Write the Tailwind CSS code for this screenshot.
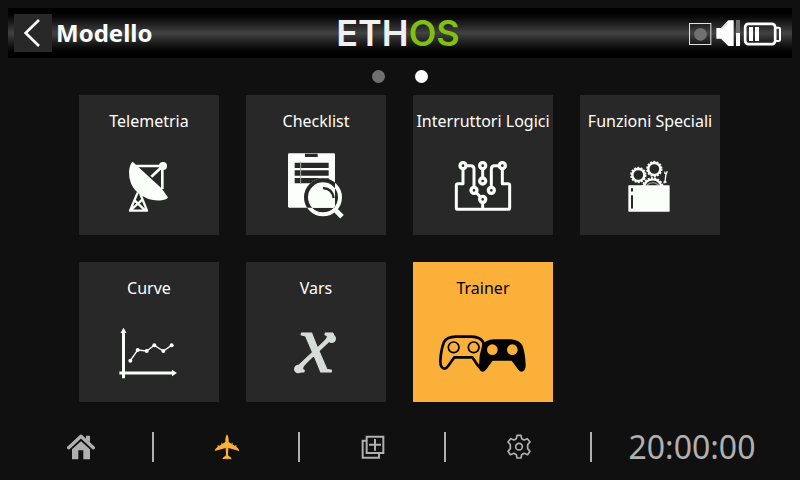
<!DOCTYPE html>
<html lang="it">
<head>
<meta charset="utf-8">
<meta name="viewport" content="width=device-width, initial-scale=1">
<title>Modello</title>
<script src="https://cdn.jsdelivr.net/npm/@tailwindcss/browser@4"></script>
</head>
<body class="flex min-h-screen flex-col bg-[#101010] p-2 font-['Noto_Sans',sans-serif] text-white">

<header class="flex h-[50px] items-center bg-linear-to-b from-black via-[#424342] to-black">
  <div class="flex flex-1 items-center gap-1 pl-1.5">
    <button type="button" aria-label="Indietro" class="size-[38px] bg-[#282828]">
      <svg class="size-full" viewBox="0 0 114 114" fill="none" stroke="#fff" stroke-width="8"><path d="M75 18 35 57l40 39"/></svg>
    </button>
    <h1 class="text-2xl font-bold">Modello</h1>
  </div>
  <div class="font-['Inter',sans-serif] text-4xl font-semibold text-[#f0f0f0]">ETH<span class="text-[#80c010]">OS</span></div>
  <div class="flex flex-1 justify-end pr-[10px]">
    <svg class="h-[26px] w-[93px]" viewBox="57 60 279 78" role="img" aria-label="Registrazione, volume, batteria">
      <rect x="58.500" y="70.500" width="64" height="63" fill="none" stroke="#dfe3df" stroke-width="3"/>
      <circle cx="91.500" cy="103" r="19" fill="#707070"/>
      <path fill="#fff" d="M139 84h14l22-23h16v77h-16l-22-22h-14z"/>
      <path fill="none" stroke="#aaa" stroke-width="2" d="M155 87l17-18"/>
      <path fill="#707070" d="M198 60h12v39h-12z"/>
      <path fill="#fff" d="M198 99h12v39h-12zM237 81h12v42h-12zM255 81h12v42h-12z"/>
      <rect x="225.500" y="71.500" width="90" height="61" rx="10" fill="none" stroke="#fff" stroke-width="8"/>
      <path fill="none" stroke="#fff" stroke-width="6" d="M316 83h10q4 0 4 4v32q0 4-4 4h-10"/>
    </svg>
  </div>
</header>

<nav aria-label="Pagine" class="flex justify-center gap-[30px] pt-3">
  <button type="button" aria-label="Pagina 1" class="size-[13px] rounded-full bg-[#707070]"></button>
  <button type="button" aria-label="Pagina 2" aria-current="page" class="size-[13px] rounded-full bg-white"></button>
</nav>

<main class="grid grid-cols-4 gap-[27px] pt-3 pr-[72px] pl-[71px]">
  <button type="button" class="flex flex-col bg-[#282828] pt-3.5">
    <span class="mb-3 w-full text-center text-base whitespace-nowrap">Telemetria</span>
    <svg class="w-full" viewBox="0 150 420 270" aria-hidden="true" fill="none" stroke="#fafffa">
      <path fill="#fafffa" stroke="none" d="M161 200q-9 6-11 30-1 39 27 64 32 26 71 22 16-2 19-9-9-12-18-26z"/>
      <path stroke-width="8" d="M166 213h80M250 216v66M246 218l-29 27"/>
      <circle cx="252" cy="213" r="12" fill="#fafffa" stroke="none"/>
      <path stroke-width="7" stroke-linejoin="round" d="M176 293l-23 54h51l-20-50M167 316l31 30M190 314l-34 31"/>
    </svg>
  </button>

  <button type="button" class="flex flex-col bg-[#282828] pt-3.5">
    <span class="mb-3 w-full text-center text-base whitespace-nowrap">Checklist</span>
    <svg class="w-full" viewBox="0 150 420 270" aria-hidden="true">
      <clipPath id="sheet"><rect x="126" y="175" width="141" height="163" rx="4"/></clipPath>
      <rect x="126" y="175" width="141" height="163" rx="4" fill="#fafffa"/>
      <path fill="#282828" d="M177 176h38v10h-38zM146 203h102v16h-102zM146 226h102v16h-102zM146 249h102v16h-102z"/>
      <path stroke="#aaa" stroke-width="3" d="M164 202v64"/>
      <circle cx="231" cy="307" r="46" fill="#fafffa" clip-path="url(#sheet)"/>
      <circle cx="231" cy="307" r="51" fill="none" stroke="#fafffa" stroke-width="12"/>
      <circle cx="231" cy="307" r="51" fill="none" stroke="#282828" stroke-width="12" clip-path="url(#sheet)"/>
      <path stroke="#fafffa" stroke-width="15" d="M266 343l22 22"/>
      <path fill="none" stroke="#282828" stroke-width="7" d="M231 279q28 2 32 30"/>
    </svg>
  </button>

  <button type="button" class="flex flex-col bg-[#282828] pt-3.5">
    <span class="mb-3 w-full text-center text-base whitespace-nowrap">Interruttori Logici</span>
    <svg class="w-full" viewBox="9 150 420 270" aria-hidden="true" fill="none" stroke="#fafffa" stroke-width="9" stroke-linejoin="round">
      <path d="M159 220v46h-15q-5 0-5 5v67q0 5 5 5h150q5 0 5-5v-67q0-5-5-5h-17v-46M168 212h14q10 0 10 10v55M268 212h-14q-10 0-10 10v55M218 220v30M198 292l13 14M218 320v22"/>
      <g stroke-width="10"><circle cx="159" cy="212" r="9"/><circle cx="218" cy="212" r="9"/><circle cx="277" cy="212" r="9"/><circle cx="218" cy="258" r="9"/><circle cx="192" cy="286" r="9"/><circle cx="244" cy="286" r="9"/><circle cx="218" cy="313" r="9"/></g>
    </svg>
  </button>

  <button type="button" class="flex flex-col bg-[#282828] pt-3.5">
    <span class="mb-3 w-full text-center text-base whitespace-nowrap">Funzioni Speciali</span>
    <svg class="w-full" viewBox="9 150 420 270" aria-hidden="true" fill="none" stroke="#fafffa">
      <g stroke-width="7"><circle cx="184" cy="240" r="18"/><circle cx="232" cy="222" r="18"/><circle cx="227" cy="280" r="27"/></g>
      <g stroke-width="5" stroke-dasharray="6 4"><circle cx="184" cy="240" r="22"/><circle cx="232" cy="222" r="22"/><circle cx="227" cy="280" r="31"/></g>
      <path stroke="#999" stroke-width="4" d="M209 271q18-16 36 0"/>
      <path stroke-width="4" d="M267 236l-3 24M263 230l1 5 4 1 3-7M261 265l1-5h4l1 4"/>
      <rect x="154" y="271" width="124" height="79" rx="2" fill="#fafffa" stroke="none"/>
      <path stroke="#282828" stroke-width="6" stroke-linecap="round" d="M165 282v5M165 303v35"/>
    </svg>
  </button>

  <button type="button" class="flex flex-col bg-[#282828] pt-3.5">
    <span class="mb-3 w-full text-center text-base whitespace-nowrap">Curve</span>
    <svg class="w-full" viewBox="0 150 420 270" aria-hidden="true" fill="none" stroke="#fafffa">
      <path stroke-width="9" d="M133.500 208v141M121 333h160"/>
      <path fill="#fafffa" stroke="none" d="M133.500 197l9 16h-18zM294 333l-15-10v20z"/>
      <path stroke-width="4" d="M154 296l22-32 27 3 23-17 27 17 25-17"/>
      <g fill="#fafffa" stroke="none"><circle cx="154" cy="296" r="6"/><circle cx="176" cy="264" r="6"/><circle cx="203" cy="267" r="6"/><circle cx="226" cy="250" r="6"/><circle cx="253" cy="267" r="6"/><circle cx="278" cy="250" r="6"/></g>
    </svg>
  </button>

  <button type="button" class="flex flex-col bg-[#282828] pt-3.5">
    <span class="mb-3 w-full text-center text-base whitespace-nowrap">Vars</span>
    <svg class="w-full overflow-visible" viewBox="0 150 420 270" aria-hidden="true" fill="#d8dcd8">
      <text x="208" y="331" text-anchor="middle" font-size="252" stroke="#d8dcd8" stroke-width="3" stroke-linejoin="round" class="font-['Liberation_Serif',serif] italic">x</text>
      <circle cx="157" cy="321" r="13"/>
      <circle cx="257" cy="230" r="13"/>
    </svg>
  </button>

  <button type="button" class="flex flex-col bg-[#fab039] pt-3.5 text-black">
    <span class="mb-3 w-full text-center text-base whitespace-nowrap">Trainer</span>
    <svg class="w-full" viewBox="0 150 420 270" aria-hidden="true">
      <g fill="none" stroke="#000">
        <path stroke-width="8" stroke-linejoin="round" d="M128 224h48q26 1 34 16 7 22 8 55 0 22-12 24-6 0-11-8l-17-25h-54l-18 25q-7 10-12 9-12-2-12-22 1-32 11-58 8-15 35-16z"/>
        <circle cx="122" cy="256" r="16" stroke-width="5"/><circle cx="182" cy="256" r="16" stroke-width="5"/>
      </g>
      <path d="M244 232h50q28 3 35 20 8 24 9 58 0 18-12 19-6 0-10-6l-20-27h-57l-20 27q-5 6-10 6-12-2-11-20 0-31 10-61 8-14 36-16z"/>
      <g fill="#fab039"><circle cx="238" cy="263" r="16"/><circle cx="298" cy="263" r="16"/></g>
    </svg>
  </button>
</main>

<footer class="mt-auto flex items-center pb-2.5 text-[#b0b0b0]">
  <a href="#home" aria-label="Home" class="flex h-[30px] flex-[144] items-center justify-center border-r-2 border-current">
    <svg class="ml-0.5 h-[26px] w-7" viewBox="201 74 84 78"><path fill="currentColor" d="M216 120l27-24 27 24v30h-20v-27h-15v27h-19zM258 79h12v20l-12-10z"/><path fill="none" stroke="currentColor" stroke-width="10" stroke-linecap="round" stroke-linejoin="round" d="M206 115l37-34 37 34"/></svg>
  </a>
  <a href="#modello" aria-label="Modello" aria-current="page" class="flex h-[30px] flex-[144] items-center justify-center border-r-2 border-[#b0b0b0]">
    <svg class="ml-0.5 h-[26px] w-[26px]" viewBox="643 74 78 78"><path fill="#fab039" d="M682 75q4 5 5 14v9l9 6v-4h3v6l8 4v-3h3v5q8 6 9 13l-33-9-1 22 10 8v4l-11-2-2 3-2-3-11 2v-4l10-8-1-22-33 9q1-7 9-13v-5h3v3l8-4v-6h3v4l9-6v-9q1-9 5-14z"/></svg>
  </a>
  <a href="#schermate" aria-label="Schermate" class="flex h-[30px] flex-[144] items-center justify-center border-r-2 border-current">
    <svg class="ml-0.5 h-6 w-6" viewBox="1083 76 72 72" fill="none" stroke="currentColor" stroke-width="6"><path d="M1100 81h50v49h-50zM1097 93h-9v51h49v-11M1125 88v35M1107 105h36"/></svg>
  </a>
  <a href="#sistema" aria-label="Sistema" class="flex h-[30px] flex-[144] items-center justify-center border-r-2 border-current">
    <svg class="ml-0.5 h-[26px] w-[26px]" viewBox="318 74 78 78" fill="none" stroke="currentColor" stroke-width="5" stroke-linejoin="round"><path d="M351 78h12l2 10 7 4 10-4 8 10-7 8v12l7 8-7 10-11-4-7 4-2 10h-12l-2-10-7-4-11 4-7-10 7-8v-12l-7-8 8-10 10 4 7-4z"/><circle cx="357" cy="112" r="10"/></svg>
  </a>
  <time class="flex-[200] text-center text-[32px] leading-[30px]">20:00:00</time>
</footer>
</body>
</html>
